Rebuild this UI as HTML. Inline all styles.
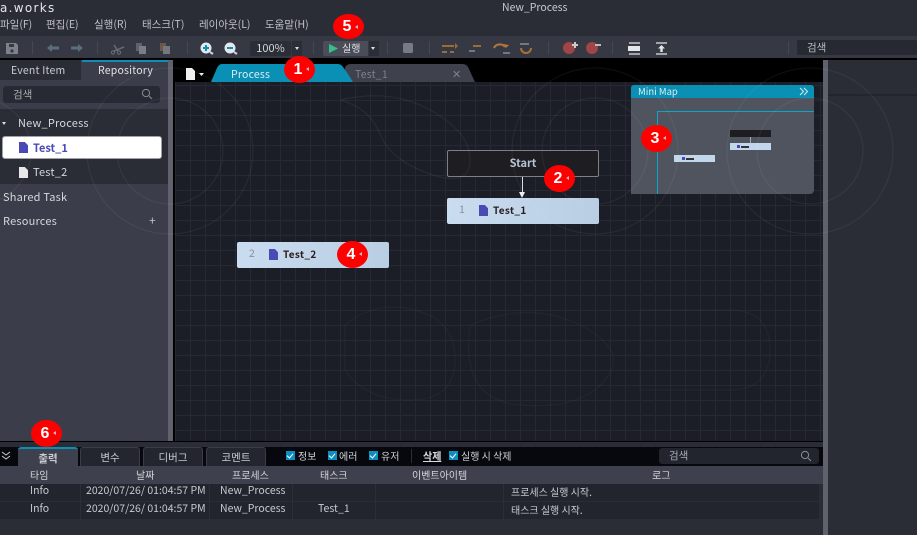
<!DOCTYPE html>
<html><head><meta charset="utf-8"><style>
html,body{margin:0;padding:0;width:917px;height:535px;overflow:hidden;background:#2b2d36}
*{box-sizing:border-box}
body{position:relative;font-family:"Noto Sans CJK KR","Liberation Sans",sans-serif;font-size:10px;color:#d4d6da}
.a{position:absolute}
.t{position:absolute;white-space:nowrap;line-height:14px}
.c{position:absolute;width:31px;height:27px;border-radius:50%;background:#f00;color:#fff;font-family:"Liberation Sans",sans-serif;font-weight:bold;font-size:16px;line-height:27px;text-align:center;z-index:20;padding-right:3px}
.c i{position:absolute;left:22px;top:11px;width:0;height:0;border:2.5px solid transparent;border-left:0;border-right:3px solid #bbb}
.mn{top:18px;color:#bfc1c6;font-size:10.5px}
.sep{position:absolute;top:41px;width:1px;height:13px;background:#454852}
.tab{position:absolute;top:447px;height:19px;background:#23262f;border:1px solid #3a3d47;border-bottom:0;border-radius:3px 3px 0 0;text-align:center;line-height:19px;color:#c8cad0;font-size:10.5px}
.ck{position:absolute;top:451px;width:9px;height:9px;background:#0a8fc0}
.ck:after{content:"";position:absolute;left:2px;top:1px;width:3px;height:5px;border:solid #fff;border-width:0 1.3px 1.3px 0;transform:rotate(40deg)}
.row{position:absolute;left:0;width:819px;height:17px;background:#22252e}
.cell{position:absolute;white-space:nowrap;color:#c9cbd0;font-size:10.5px;line-height:14px}
.hd{position:absolute;top:468px;white-space:nowrap;color:#d4d6da;font-size:10px;line-height:14px}
.node{position:absolute;width:152px;height:26px;background:linear-gradient(90deg,#c9dcf0,#b9cee3);border-radius:2px}
.doc{position:absolute;width:9px;height:11px;background:#4a4ab5;clip-path:polygon(0 0,65% 0,100% 30%,100% 100%,0 100%)}
</style></head><body>

<!-- title -->
<div class="a" style="left:0;top:0;width:917px;height:36px;background:#2b2d36"></div>
<div class="t" style="left:0;top:1px;font-family:'DejaVu Sans',sans-serif;font-size:12px;letter-spacing:1.3px;color:#e6e7ea">a.works</div>
<div class="t" style="left:502px;top:1px;font-size:10.5px;color:#c8cacf">New_Process</div>
<div class="t mn" style="left:0">파일(F)</div>
<div class="t mn" style="left:46px">편집(E)</div>
<div class="t mn" style="left:94px">실행(R)</div>
<div class="t mn" style="left:142px">태스크(T)</div>
<div class="t mn" style="left:199px">레이아웃(L)</div>
<div class="t mn" style="left:265px">도움말(H)</div>

<!-- toolbar -->
<div class="a" style="left:0;top:36px;width:917px;height:22px;background:#363944"></div>
<div class="a" style="left:0;top:58px;width:917px;height:2px;background:#000"></div>
<svg class="a" style="left:0;top:36px" width="800" height="22" viewBox="0 36 800 22">
<path d="M6 43h10l2 2v9H6z" fill="#7d818a"/><rect x="9" y="44" width="5" height="3" fill="#363944"/><circle cx="12" cy="51" r="1.6" fill="#363944"/>
<path d="M47 48l5-4v2.5h7v3h-7V52z" fill="#5c6d80"/><path d="M83 48l-5-4v2.5h-7v3h7V52z" fill="#5c6d80"/>
<path d="M114 51l10-4M114 45l4 6" stroke="#6c6f78" stroke-width="1.3" fill="none"/><circle cx="113" cy="52.5" r="1.6" fill="none" stroke="#6c6f78"/><circle cx="119" cy="52.5" r="1.6" fill="none" stroke="#6c6f78"/>
<rect x="136" y="43" width="6" height="8" fill="#5e626c"/><rect x="139" y="46" width="7" height="8" fill="#7a7e87"/>
<rect x="160" y="43" width="6" height="8" fill="#6b5a48"/><rect x="163" y="46" width="7" height="8" fill="#75787f"/>
<circle cx="206" cy="48" r="5.5" fill="#e4e8ec"/><path d="M203 48h6M206 45v6" stroke="#0e8fb8" stroke-width="2"/><path d="M210 52l3 2" stroke="#cfd3d8" stroke-width="2"/>
<circle cx="230" cy="48" r="5.5" fill="#e4e8ec"/><path d="M227 48h6" stroke="#0e8fb8" stroke-width="2"/><path d="M234 52l3 2" stroke="#cfd3d8" stroke-width="2"/>
<rect x="403" y="43" width="10" height="10" rx="1.5" fill="#777b85"/>
<path d="M442 46h12M442 52h5M450 52h4" stroke="#9a6c3a" stroke-width="2"/><path d="M455 43l3 3-3 3z" fill="#9a6c3a"/>
<path d="M469 51h6" stroke="#777" stroke-width="2"/><path d="M473 46h8" stroke="#9a6c3a" stroke-width="2"/>
<path d="M494 48a6 5 0 0 1 11 -1" stroke="#b5763a" stroke-width="2" fill="none"/><path d="M503 53h7" stroke="#777" stroke-width="2"/><path d="M503 44l3 4 3-3z" fill="#b5763a"/>
<path d="M520 44h9" stroke="#777" stroke-width="2"/><path d="M521 48a5 5 0 0 0 10 0" stroke="#a8703a" stroke-width="2" fill="none"/>
<circle cx="569" cy="48" r="6" fill="#a04545"/><path d="M572 45h6M575 42v6" stroke="#ccc" stroke-width="2"/>
<circle cx="592" cy="48" r="6" fill="#a04545"/><path d="M595 45h6" stroke="#bbb" stroke-width="2"/>
<path d="M629 43h11M629 54h11" stroke="#c6c8cc" stroke-width="1.5"/><rect x="628" y="46" width="12" height="5" fill="#e4e6e8"/>
<path d="M656 43h11M656 54h11" stroke="#c6c8cc" stroke-width="1.5"/><path d="M661.5 45l3.5 3.5h-2.3V52h-2.4v-3.5H658z" fill="#e4e6e8"/>
</svg>
<div class="sep" style="left:32px"></div><div class="sep" style="left:97px"></div><div class="sep" style="left:187px"></div><div class="sep" style="left:313px"></div><div class="sep" style="left:387px"></div><div class="sep" style="left:429px"></div><div class="sep" style="left:548px"></div><div class="sep" style="left:612px"></div><div class="sep" style="left:788px"></div>
<div class="a" style="left:250px;top:41px;width:41px;height:15px;background:#2b2e37;border-radius:2px;color:#d5d7db;font-size:11px;line-height:15px;text-align:center">100%</div>
<div class="a" style="left:292px;top:41px;width:10px;height:15px;background:#2b2e37"></div>
<div class="a" style="left:295px;top:47px;border:2.5px solid transparent;border-top:3px solid #ddd;border-bottom:0"></div>
<div class="a" style="left:323px;top:41px;width:45px;height:15px;background:#4a4d58;border-radius:2px 0 0 2px"></div>
<svg class="a" style="left:323px;top:41px" width="20" height="15"><path d="M6 3l9 4.5-9 4.5z" fill="#35c08a"/></svg>
<div class="t" style="left:342px;top:41px;font-size:10px;color:#e0e2e5">실행</div>
<div class="a" style="left:369px;top:41px;width:10px;height:15px;background:#2b2e37"></div>
<div class="a" style="left:371px;top:47px;border:2.5px solid transparent;border-top:3px solid #ddd;border-bottom:0"></div>
<div class="a" style="left:797px;top:40px;width:120px;height:15px;background:#262932;border-radius:2px"></div>
<div class="t" style="left:807px;top:41px;font-size:10.5px;color:#b9bbc0">검색</div>

<!-- left panel -->
<div class="a" style="left:0;top:60px;width:168px;height:381px;background:#3b3e4a"></div>
<div class="a" style="left:0;top:60px;width:81px;height:20px;background:#2b2d36"></div>
<div class="a" style="left:82px;top:60px;width:87px;height:2px;background:#0c8fb6"></div>
<div class="t" style="left:11px;top:64px;font-size:10.5px;letter-spacing:.2px;color:#c8cacf">Event Item</div>
<div class="t" style="left:98px;top:64px;font-size:10.5px;letter-spacing:.2px;color:#e2e3e6">Repository</div>
<div class="a" style="left:3px;top:86px;width:157px;height:17px;background:#272a33;border-radius:3px"></div>
<div class="t" style="left:13px;top:88px;font-size:10.5px;color:#a9abb1">검색</div>
<svg class="a" style="left:141px;top:88px" width="12" height="12"><circle cx="5" cy="5" r="3.6" fill="none" stroke="#8b8e95"/><path d="M8 8l3 3" stroke="#8b8e95"/></svg>
<div class="a" style="left:0;top:109px;width:168px;height:75px;background:#2b2d36"></div>
<div class="a" style="left:2px;top:122px;border:2.5px solid transparent;border-top:3px solid #ddd;border-bottom:0"></div>
<div class="t" style="left:18px;top:116px;font-size:11px;letter-spacing:.2px;color:#d6d8dc">New_Process</div>
<div class="a" style="left:2px;top:136px;width:160px;height:23px;background:#fff;border:1px solid #9ea1a8;border-radius:3px"></div>
<div class="doc" style="left:19px;top:142px"></div>
<div class="t" style="left:33px;top:141px;font-size:11px;font-weight:bold;color:#4a4ab5">Test_1</div>
<div class="doc" style="left:19px;top:167px;background:#e8e8e8"></div>
<div class="t" style="left:33px;top:165px;font-size:11px;letter-spacing:.2px;color:#d6d8dc">Test_2</div>
<div class="t" style="left:3px;top:190px;font-size:11px;letter-spacing:.2px;color:#d6d8dc">Shared Task</div>
<div class="t" style="left:3px;top:214px;font-size:11px;letter-spacing:.2px;color:#d6d8dc">Resources</div>
<div class="t" style="left:149px;top:214px;font-size:12px;color:#c0c2c7">+</div>
<div class="a" style="left:168px;top:60px;width:5px;height:381px;background:#5f626c"></div>
<div class="a" style="left:173px;top:60px;width:2px;height:381px;background:#000"></div>

<!-- canvas -->
<div class="a" style="left:175px;top:60px;width:650px;height:381px;background:#000"></div>
<div class="a" style="left:175px;top:82px;width:648px;height:359px;background-color:#1b1e27;background-image:linear-gradient(#262933 1px,transparent 1px),linear-gradient(90deg,#262933 1px,transparent 1px);background-size:15px 15px;background-position:0 3px"></div>
<!-- tabs -->
<svg class="a" style="left:175px;top:60px" width="310" height="22">
<path d="M169 22l1-14q1-4 6-4h112q3 0 5 3l7 15z" fill="#3f424d"/>
<path d="M36 22l6-14q2-4 5-4h116q3 0 5 3l5 7 5 8z" fill="#0a8fb5"/>
<path d="M11 8h6l3 3v9h-9z" fill="#f0f0f0"/><path d="M24 13h5l-2.5 3z" fill="#eee"/>
</svg>
<div class="t" style="left:231px;top:68px;font-size:10.5px;letter-spacing:.2px;color:#e0eef4">Process</div>
<div class="t" style="left:355px;top:68px;font-size:10.5px;letter-spacing:.2px;color:#7f828b">Test_1</div>
<div class="t" style="left:452px;top:67px;font-size:11px;color:#7f828b">✕</div>

<!-- watermark circles -->
<svg class="a" style="left:0;top:60px;z-index:8;pointer-events:none" width="917" height="381" fill="none" stroke="#fff" stroke-opacity=".055" stroke-width="1.2">
<circle cx="170" cy="91" r="83"/><circle cx="170" cy="91" r="53"/>
<circle cx="-22" cy="91" r="53"/><circle cx="595" cy="91" r="83"/><circle cx="595" cy="91" r="53"/>
<circle cx="810" cy="91" r="83"/><circle cx="810" cy="91" r="53"/>
<path d="M340 40q50-12 90 10t40 50q0 28-40 14t-50-40-40-34z"/>
<path d="M345 265q30-25 70-15t40 50-45 40-65-30z" stroke-opacity=".03"/>
<path d="M470 265q60-25 110 0t25 55-85 25-50-80z" stroke-opacity=".03"/>
<path d="M640 250h90q40 0 40 40t-40 40h-90z" stroke-opacity=".03"/>
</svg>

<!-- nodes -->
<div class="a" style="left:447px;top:150px;width:152px;height:27px;background:#1e1e22;border:1px solid #7c8088;border-radius:2px;text-align:center;line-height:24px;font-size:11px;font-weight:bold;color:#b9c3d6">Start</div>
<div class="a" style="left:522px;top:177px;width:1px;height:16px;background:#ddd"></div>
<div class="a" style="left:519px;top:192px;border:3.5px solid transparent;border-top:6px solid #eee;border-bottom:0"></div>
<div class="node" style="left:447px;top:198px"><span class="t" style="left:12px;top:5px;font-size:10.5px;color:#8a8e98">1</span><div class="doc" style="left:32px;top:7px"></div><span class="t" style="left:46px;top:5px;font-size:10px;letter-spacing:.3px;font-weight:bold;color:#2a1c1c">Test_1</span></div>
<div class="node" style="left:237px;top:242px"><span class="t" style="left:12px;top:5px;font-size:10.5px;color:#8a8e98">2</span><div class="doc" style="left:32px;top:7px"></div><span class="t" style="left:46px;top:5px;font-size:10px;letter-spacing:.3px;font-weight:bold;color:#2a1c1c">Test_2</span></div>

<!-- minimap -->
<div class="a" style="left:631px;top:85px;width:183px;height:109px;background:#50545f;border-radius:3px 3px 4px 0;overflow:hidden">
<div class="a" style="left:0;top:0;width:183px;height:13px;background:#0a8fb5"></div>
<div class="t" style="left:7px;top:0;font-size:9.5px;line-height:13px;color:#d8eef5">Mini Map</div>
<svg class="a" style="left:168px;top:2px" width="10" height="9" fill="none" stroke="#d8eef5" stroke-width="1"><path d="M1 1l3.5 3.5L1 8M5 1l3.5 3.5L5 8"/></svg>
<div class="a" style="left:26px;top:26px;width:157px;height:83px;border-left:1px solid #08a8c8;border-top:1px solid #08a8c8"></div>
<div class="a" style="left:99px;top:45px;width:41px;height:7px;background:#1e1e22"></div>
<div class="a" style="left:119px;top:52px;width:1px;height:6px;background:#aaa"></div>
<div class="a" style="left:99px;top:58px;width:41px;height:7px;background:#c3d7ec"></div>
<div class="a" style="left:43px;top:70px;width:41px;height:7px;background:#c3d7ec"></div>
<div class="a" style="left:106px;top:60px;width:3px;height:3px;background:#4a4ab5"></div><div class="a" style="left:110px;top:61px;width:8px;height:1.5px;background:#333"></div>
<div class="a" style="left:51px;top:72px;width:3px;height:3px;background:#4a4ab5"></div><div class="a" style="left:55px;top:73px;width:8px;height:1.5px;background:#333"></div>
</div>

<!-- right panel -->
<div class="a" style="left:823px;top:60px;width:5px;height:475px;background:#5f626c"></div>
<div class="a" style="left:828px;top:60px;width:89px;height:475px;background:#2b2d36"></div>
<div class="a" style="left:828px;top:94px;width:89px;height:2px;background:#23252d"></div>

<!-- bottom -->
<div class="a" style="left:0;top:441px;width:823px;height:6px;background:#2b2d36;border-top:1px solid #000"></div>
<div class="a" style="left:0;top:447px;width:823px;height:19px;background:#06080d"></div>
<div class="a" style="left:0;top:466px;width:823px;height:69px;background:#2b2d36"></div>
<div class="a" style="left:0;top:466px;width:823px;height:18px;background:#3e414d"></div>
<svg class="a" style="left:1px;top:451px" width="11" height="11" fill="none" stroke="#ccc" stroke-width="1"><path d="M1 1l4 3 4-3M1 5l4 3 4-3"/></svg>
<div class="tab" style="left:18px;width:60px;background:#3e414d;border:0;border-top:2px solid #0a8fb5;font-weight:bold">출력</div>
<div class="tab" style="left:80px;width:60px">변수</div>
<div class="tab" style="left:143px;width:60px">디버그</div>
<div class="tab" style="left:206px;width:60px">코멘트</div>
<div class="ck" style="left:286px"></div><div class="t" style="left:298px;top:449px;font-size:10px;color:#d0d2d6">정보</div>
<div class="ck" style="left:328px"></div><div class="t" style="left:339px;top:449px;font-size:10px;color:#d0d2d6">에러</div>
<div class="ck" style="left:369px"></div><div class="t" style="left:381px;top:449px;font-size:10px;color:#d0d2d6">유저</div>
<div class="a" style="left:411px;top:449px;width:1px;height:14px;background:#2a2d35"></div>
<div class="t" style="left:423px;top:449px;font-size:10px;font-weight:bold;text-decoration:underline;color:#d8dade">삭제</div>
<div class="ck" style="left:449px"></div><div class="t" style="left:461px;top:449px;font-size:10px;color:#d0d2d6">실행 시 삭제</div>
<div class="a" style="left:659px;top:448px;width:160px;height:16px;background:#22252e;border-radius:3px"></div>
<div class="t" style="left:669px;top:449px;font-size:10.5px;color:#a9abb1">검색</div>
<svg class="a" style="left:800px;top:450px" width="12" height="12"><circle cx="5" cy="5" r="3.6" fill="none" stroke="#8b8e95"/><path d="M8 8l3 3" stroke="#8b8e95"/></svg>

<div class="hd" style="left:30px">타임</div><div class="hd" style="left:136px">날짜</div><div class="hd" style="left:232px">프로세스</div><div class="hd" style="left:320px">태스크</div><div class="hd" style="left:412px">이벤트아이템</div><div class="hd" style="left:652px">로그</div>
<div class="row" style="top:484px"></div><div class="row" style="top:502px"></div>
<div class="a" style="left:80px;top:484px;width:1px;height:35px;background:#2c2f38"></div><div class="a" style="left:209px;top:484px;width:1px;height:35px;background:#2c2f38"></div><div class="a" style="left:292px;top:484px;width:1px;height:35px;background:#2c2f38"></div><div class="a" style="left:375px;top:484px;width:1px;height:35px;background:#2c2f38"></div><div class="a" style="left:503px;top:484px;width:1px;height:35px;background:#2c2f38"></div>
<div class="cell" style="left:30px;top:484px">Info</div><div class="cell" style="left:86px;top:484px">2020/07/26/ 01:04:57 PM</div><div class="cell" style="left:220px;top:484px">New_Process</div><div class="cell" style="left:511px;top:485px;font-size:10px">프로세스 실행 시작.</div>
<div class="cell" style="left:30px;top:502px">Info</div><div class="cell" style="left:86px;top:502px">2020/07/26/ 01:04:57 PM</div><div class="cell" style="left:220px;top:502px">New_Process</div><div class="cell" style="left:318px;top:502px">Test_1</div><div class="cell" style="left:511px;top:503px;font-size:10px">태스크 실행 시작.</div>

<!-- markers -->
<div class="c" style="left:284px;top:56px">1<i></i></div>
<div class="c" style="left:544px;top:165px">2<i></i></div>
<div class="c" style="left:641px;top:125px">3<i></i></div>
<div class="c" style="left:337px;top:241px">4<i></i></div>
<div class="c" style="left:333px;top:14px;height:25px;line-height:26px">5<i></i></div>
<div class="c" style="left:31px;top:420px">6<i></i></div>
</body></html>
